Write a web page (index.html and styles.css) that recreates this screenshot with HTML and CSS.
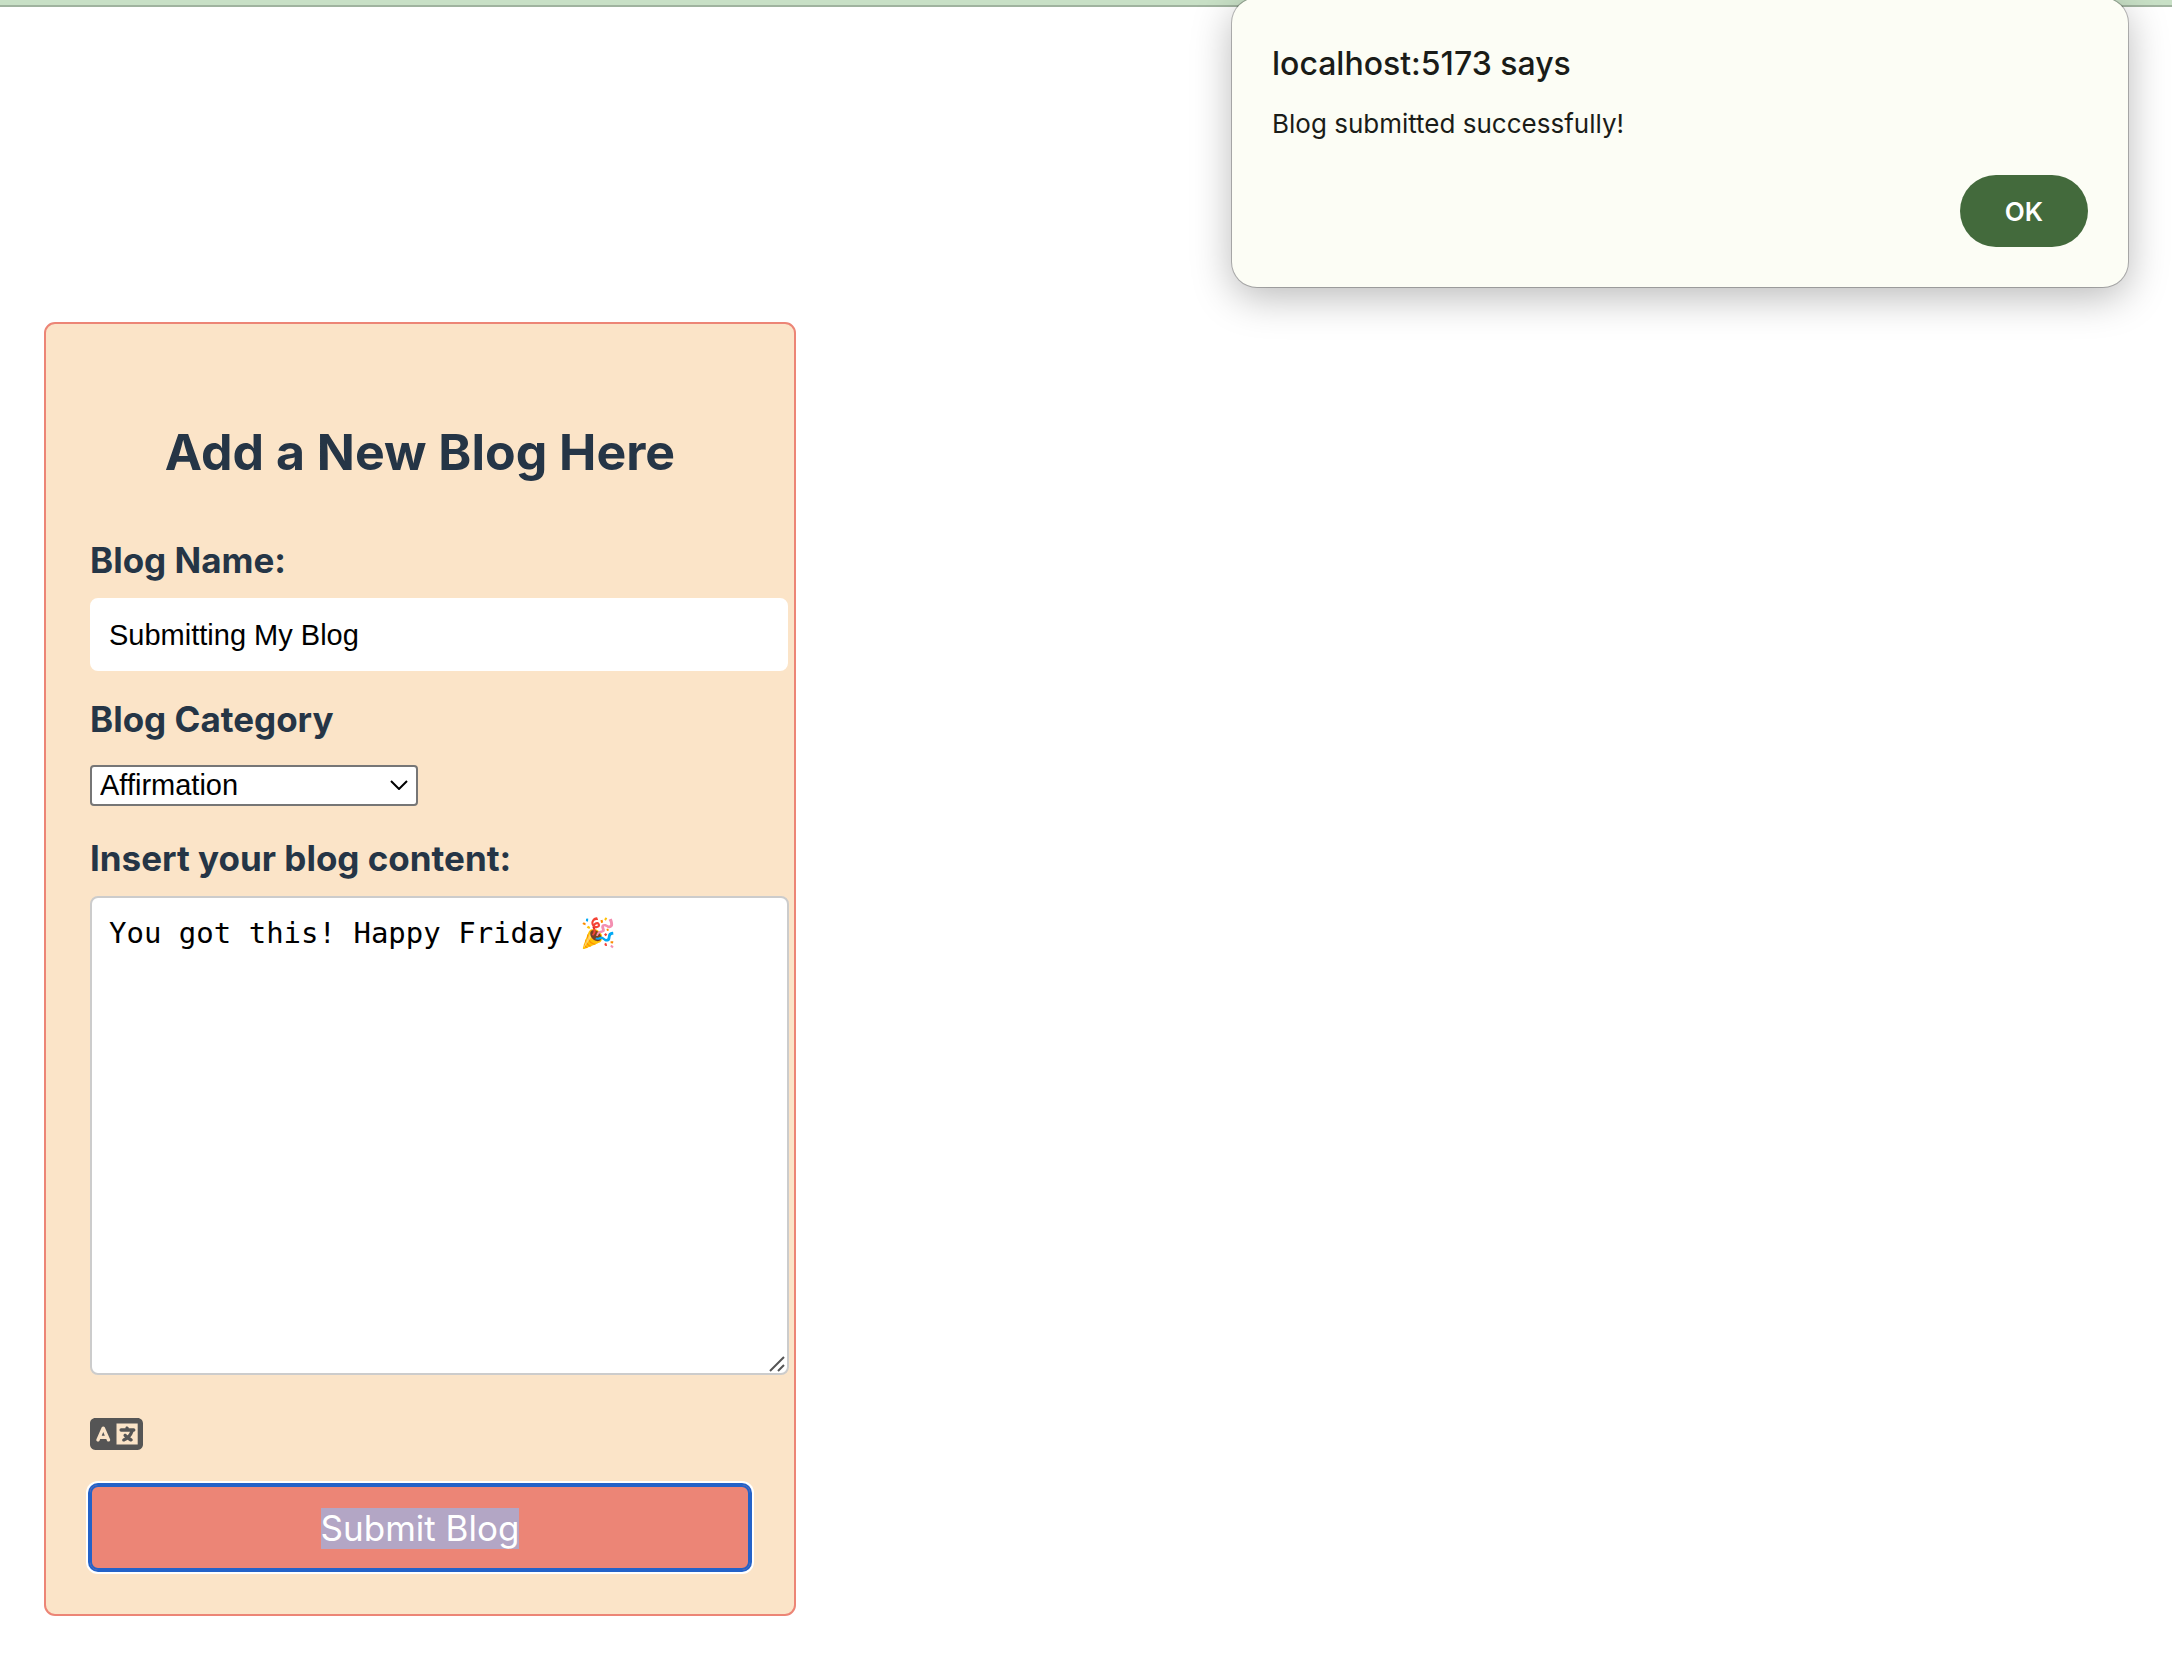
FILE: index.html
```html
<!DOCTYPE html>
<html lang="en">
<head>
<meta charset="utf-8">
<meta name="viewport" content="width=device-width, initial-scale=1">
<title>Add a New Blog</title>
<link rel="stylesheet" href="styles.css">
</head>
<body>
<header class="topbar"></header>
<main class="page">
  <form class="card">
    <h1 class="card-title">Add a New Blog Here</h1>
    <div class="field">
      <label for="blog-name">Blog Name:</label>
      <input class="text-input" id="blog-name" type="text" value="Submitting My Blog">
    </div>
    <div class="field field-select">
      <label for="blog-category">Blog Category</label>
      <div class="select-wrap">
        <select id="blog-category"><option>Affirmation</option></select>
        <svg class="chevron" viewBox="0 0 18 10" aria-hidden="true"><path d="M1 1l8 8 8-8"/></svg>
      </div>
    </div>
    <div class="field">
      <label for="blog-content">Insert your blog content:</label>
      <div class="area-wrap">
        <textarea class="text-area" id="blog-content" spellcheck="false">You got this! Happy Friday 🎉</textarea>
        <svg class="grip" viewBox="0 0 16 16" aria-hidden="true"><path d="M1 15L15 1M9 15l6-6"/></svg>
      </div>
    </div>
    <button class="translate" type="button" aria-label="Translate">
      <svg viewBox="0 64 640 384" aria-hidden="true"><path d="M0 128C0 92.700 28.700 64 64 64H576c35.300 0 64 28.700 64 64V384c0 35.300-28.700 64-64 64H64c-35.300 0-64-28.700-64-64V128zm320 0V384H576V128H320zM178.300 175.900c-3.200-7.200-10.400-11.900-18.300-11.900s-15.100 4.700-18.300 11.900l-64 144c-4.500 10.100 .1 21.900 10.200 26.400s21.900-.1 26.400-10.200l8.900-20.100h73.600l8.900 20.100c4.500 10.100 16.300 14.600 26.400 10.200s14.600-16.300 10.200-26.400l-64-144zM160 233.200L179 276H141l19-42.800zM448 164c11 0 20 9 20 20v4h44 16c11 0 20 9 20 20s-9 20-20 20h-2l-1.600 4.500c-8.900 24.400-22.400 46.600-39.600 65.400c.9 .6 1.800 1.100 2.700 1.600l18.900 11.300c9.500 5.700 12.500 18 6.900 27.400s-18 12.500-27.400 6.900l-18.900-11.300c-4.500-2.700-8.800-5.500-13.100-8.500c-10.600 7.500-21.900 14-34 19.400l-3.600 1.600c-10.100 4.500-21.900-.1-26.400-10.200s.1-21.900 10.200-26.400l3.600-1.600c6.400-2.900 12.600-6.100 18.500-9.800l-12.200-12.200c-7.800-7.800-7.800-20.500 0-28.300s20.500-7.800 28.300 0l14.600 14.600 .5 .5c12.400-13.100 22.500-28.300 29.800-45H448 376c-11 0-20-9-20-20s9-20 20-20h52v-4c0-11 9-20 20-20z"/></svg>
    </button>
    <button class="submit" type="submit"><span class="selected">Submit Blog</span></button>
  </form>
</main>
<div class="alert" role="alertdialog" aria-labelledby="alert-title" aria-describedby="alert-text">
  <h2 class="alert-title" id="alert-title">localhost:5173 says</h2>
  <p class="alert-text" id="alert-text">Blog submitted successfully!</p>
  <button class="alert-ok" type="button">OK</button>
</div>
</body>
</html>
```
FILE: styles.css
```css
* {
  box-sizing: border-box;
}

body {
  margin: 0;
  background: #fff;
  color: #253546;
  font-family: Inter, "Liberation Sans", sans-serif;
}

.topbar {
  height: 7px;
  background: #c8e0c6;
  border-bottom: 2px solid #a0b39f;
}

.page {
  padding: 315px 44px 42px;
}

.card {
  max-width: 752px;
  padding: 44px;
  background: #fbe4c8;
  border: 2px solid #ec8576;
  border-radius: 11px;
}

.card-title {
  margin: 52px 0 54px;
  font-size: 50px;
  line-height: 64px;
  font-weight: 700;
  text-align: center;
}

.field {
  display: flex;
  flex-direction: column;
  align-items: flex-start;
  gap: 16px;
  margin-bottom: 26px;
}

.field-select {
  gap: 24px;
  margin-bottom: 30px;
}

.field label {
  font-size: 35px;
  line-height: 44px;
  font-weight: 700;
}

.text-input,
.text-area {
  box-sizing: content-box;
  width: 100%;
  margin: 0;
  padding: 19px 17px 17px;
  background: #fff;
  border: 2px solid #fff;
  border-radius: 8px;
  color: #000;
  font-size: 29px;
  line-height: 33px;
  outline: none;
}

.text-input {
  height: 33px;
  font-family: "Liberation Sans", Arial, sans-serif;
}

.select-wrap {
  position: relative;
  width: 328px;
}

.select-wrap select {
  display: block;
  width: 100%;
  height: 41px;
  padding: 0 8px;
  appearance: none;
  background: #fff;
  border: 2px solid #767676;
  border-radius: 4px;
  color: #000;
  font-family: "Liberation Sans", Arial, sans-serif;
  font-size: 29px;
  line-height: 37px;
}

.chevron {
  position: absolute;
  top: 15px;
  right: 10px;
  width: 18px;
  height: 10px;
  fill: none;
  stroke: #000;
  stroke-width: 2;
}

.area-wrap {
  position: relative;
  width: calc(100% + 39px);
}

.text-area {
  display: block;
  box-sizing: border-box;
  height: 479px;
  border-color: #ccc;
  font-family: "DejaVu Sans Mono", monospace;
  resize: none;
}

.grip {
  position: absolute;
  right: 4px;
  bottom: 3px;
  width: 16px;
  height: 16px;
  fill: none;
  stroke: #555;
  stroke-width: 2;
}

.translate {
  display: block;
  margin: 43px 0 35px;
  padding: 0;
  background: none;
  border: 0;
}

.translate svg {
  display: block;
  width: 53px;
  height: 32px;
  fill: #555;
}

.submit {
  display: block;
  width: 100%;
  height: 85px;
  padding: 0;
  background: #ec8576;
  border: 0;
  border-radius: 8px;
  box-shadow: inset 0 0 0 2px #2462c8, 0 0 0 2px #2462c8, 0 0 0 4px #fff;
  color: #fff;
  font-family: inherit;
  font-size: 35px;
}

.selected {
  display: inline-block;
  background: #b3a6c5;
  line-height: 41px;
}

.alert {
  position: absolute;
  top: -2px;
  right: 44px;
  width: 896px;
  max-width: calc(100% - 88px);
  padding: 40px;
  display: flex;
  flex-direction: column;
  background: #fcfdf5;
  border-radius: 25px;
  box-shadow: 0 0 0 1px rgba(0, 0, 0, 0.25), 0 10px 40px rgba(0, 0, 0, 0.28);
  color: #1a1c18;
}

.alert-title {
  margin: 6px 0 20px;
  font-size: 32px;
  line-height: 40px;
  font-weight: 500;
}

.alert-text {
  margin: 0 0 31px;
  font-size: 26px;
  line-height: 40px;
}

.alert-ok {
  align-self: flex-end;
  width: 128px;
  height: 72px;
  padding: 0;
  background: #436a3c;
  border: 0;
  border-radius: 36px;
  color: #fff;
  font-family: inherit;
  font-size: 26px;
  font-weight: 600;
}
```
